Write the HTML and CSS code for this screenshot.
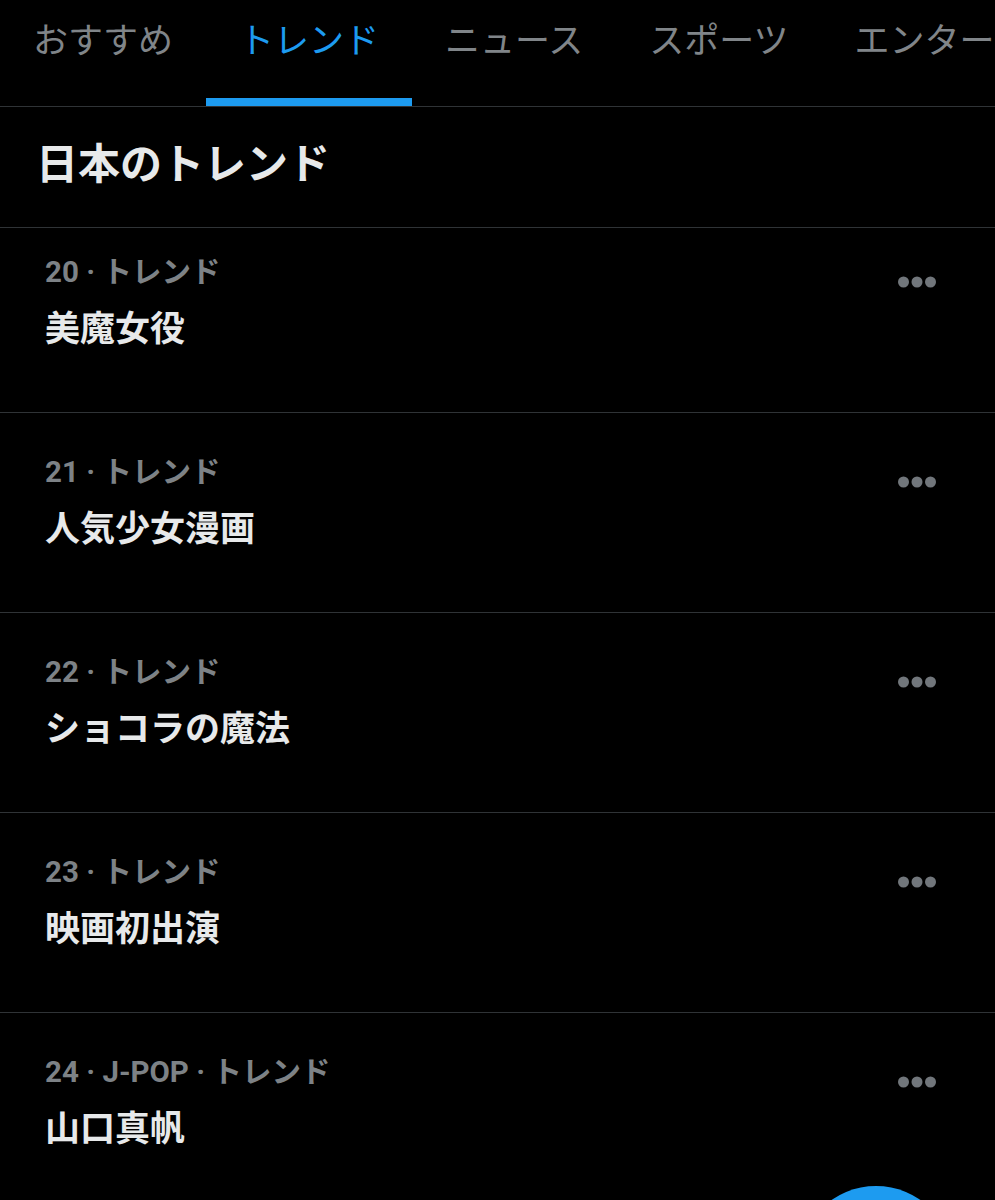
FILE: index.html
```html
<!DOCTYPE html>
<html lang="ja">
<head>
    <meta charset="UTF-8">
    <meta name="viewport" content="width=device-width, initial-scale=1.0">
    <title>トレンド</title>
    <link rel="stylesheet" href="styles.css">
</head>

<body>
    <nav class="tabs">
        <div class="tab">おすすめ</div>
        <div class="tab active">トレンド</div>
        <div class="tab">ニュース</div>
        <div class="tab">スポーツ</div>
        <div class="tab">エンターテイメント</div>
    </nav>

    <h1 class="section-title">日本のトレンド</h1>

    <div class="trend-list">
        <div class="trend">
            <div class="trend-text">
                <div class="trend-meta">20 · トレンド</div>
                <div class="trend-name">美魔女役</div>
            </div>
            <svg class="more" width="40" height="12" viewBox="0 0 40 12">
                <circle cx="6.5" cy="6" r="5.5"/>
                <circle cx="20" cy="6" r="5.5"/>
                <circle cx="33.5" cy="6" r="5.5"/>
            </svg>
        </div>

        <div class="trend">
            <div class="trend-text">
                <div class="trend-meta">21 · トレンド</div>
                <div class="trend-name">人気少女漫画</div>
            </div>
            <svg class="more" width="40" height="12" viewBox="0 0 40 12">
                <circle cx="6.5" cy="6" r="5.5"/>
                <circle cx="20" cy="6" r="5.5"/>
                <circle cx="33.5" cy="6" r="5.5"/>
            </svg>
        </div>

        <div class="trend">
            <div class="trend-text">
                <div class="trend-meta">22 · トレンド</div>
                <div class="trend-name">ショコラの魔法</div>
            </div>
            <svg class="more" width="40" height="12" viewBox="0 0 40 12">
                <circle cx="6.5" cy="6" r="5.5"/>
                <circle cx="20" cy="6" r="5.5"/>
                <circle cx="33.5" cy="6" r="5.5"/>
            </svg>
        </div>

        <div class="trend">
            <div class="trend-text">
                <div class="trend-meta">23 · トレンド</div>
                <div class="trend-name">映画初出演</div>
            </div>
            <svg class="more" width="40" height="12" viewBox="0 0 40 12">
                <circle cx="6.5" cy="6" r="5.5"/>
                <circle cx="20" cy="6" r="5.5"/>
                <circle cx="33.5" cy="6" r="5.5"/>
            </svg>
        </div>

        <div class="trend">
            <div class="trend-text">
                <div class="trend-meta">24 · J-POP · トレンド</div>
                <div class="trend-name">山口真帆</div>
            </div>
            <svg class="more" width="40" height="12" viewBox="0 0 40 12">
                <circle cx="6.5" cy="6" r="5.5"/>
                <circle cx="20" cy="6" r="5.5"/>
                <circle cx="33.5" cy="6" r="5.5"/>
            </svg>
        </div>
    </div>

    <div class="fab"></div>
</body>
</html>
```

FILE: styles.css
```css
html
{
    overflow: hidden;
}

body
{
    font-family: Roboto, "Noto Sans CJK JP", sans-serif;
    margin: 0;
    width: 995px;
    height: 1200px;
    overflow: hidden;
    position: relative;
    background-color: rgb(0, 0, 0);
    color: rgb(231, 233, 234);
}

.tabs
{
    display: flex;
    height: 106px;
    border-bottom: 1px solid rgb(47, 51, 54);
    overflow: hidden;
}

.tab
{
    flex-shrink: 0;
    height: 106px;
    padding: 0 33px;
    box-sizing: border-box;
    line-height: 84px;
    font-size: 35px;
    color: rgb(128, 133, 137);
    white-space: nowrap;
}

.tab.active
{
    color: rgb(29, 155, 240);
    box-shadow: inset 0 -8px 0 rgb(29, 155, 240);
}

.section-title
{
    margin: 0;
    height: 121px;
    box-sizing: border-box;
    padding-left: 36px;
    line-height: 116px;
    font-size: 42px;
    font-weight: 700;
    border-bottom: 1px solid rgb(47, 51, 54);
}

.trend
{
    display: flex;
    justify-content: space-between;
    align-items: flex-start;
    height: 200px;
    box-sizing: border-box;
    padding: 39px 58px 0 45px;
    border-bottom: 1px solid rgb(47, 51, 54);
}

.trend:first-child
{
    height: 185px;
    padding-top: 24px;
}

.trend-meta
{
    font-size: 29.5px;
    line-height: 40px;
    font-weight: 700;
    color: rgb(125, 130, 134);
}

.trend-name
{
    margin-top: 16px;
    font-size: 35px;
    line-height: 44px;
    font-weight: 700;
}

.more
{
    margin-top: 24px;
    fill: rgb(113, 118, 123);
}

.fab
{
    position: absolute;
    left: 798px;
    top: 1186px;
    width: 156px;
    height: 156px;
    border-radius: 50%;
    background-color: rgb(29, 155, 240);
}
```
